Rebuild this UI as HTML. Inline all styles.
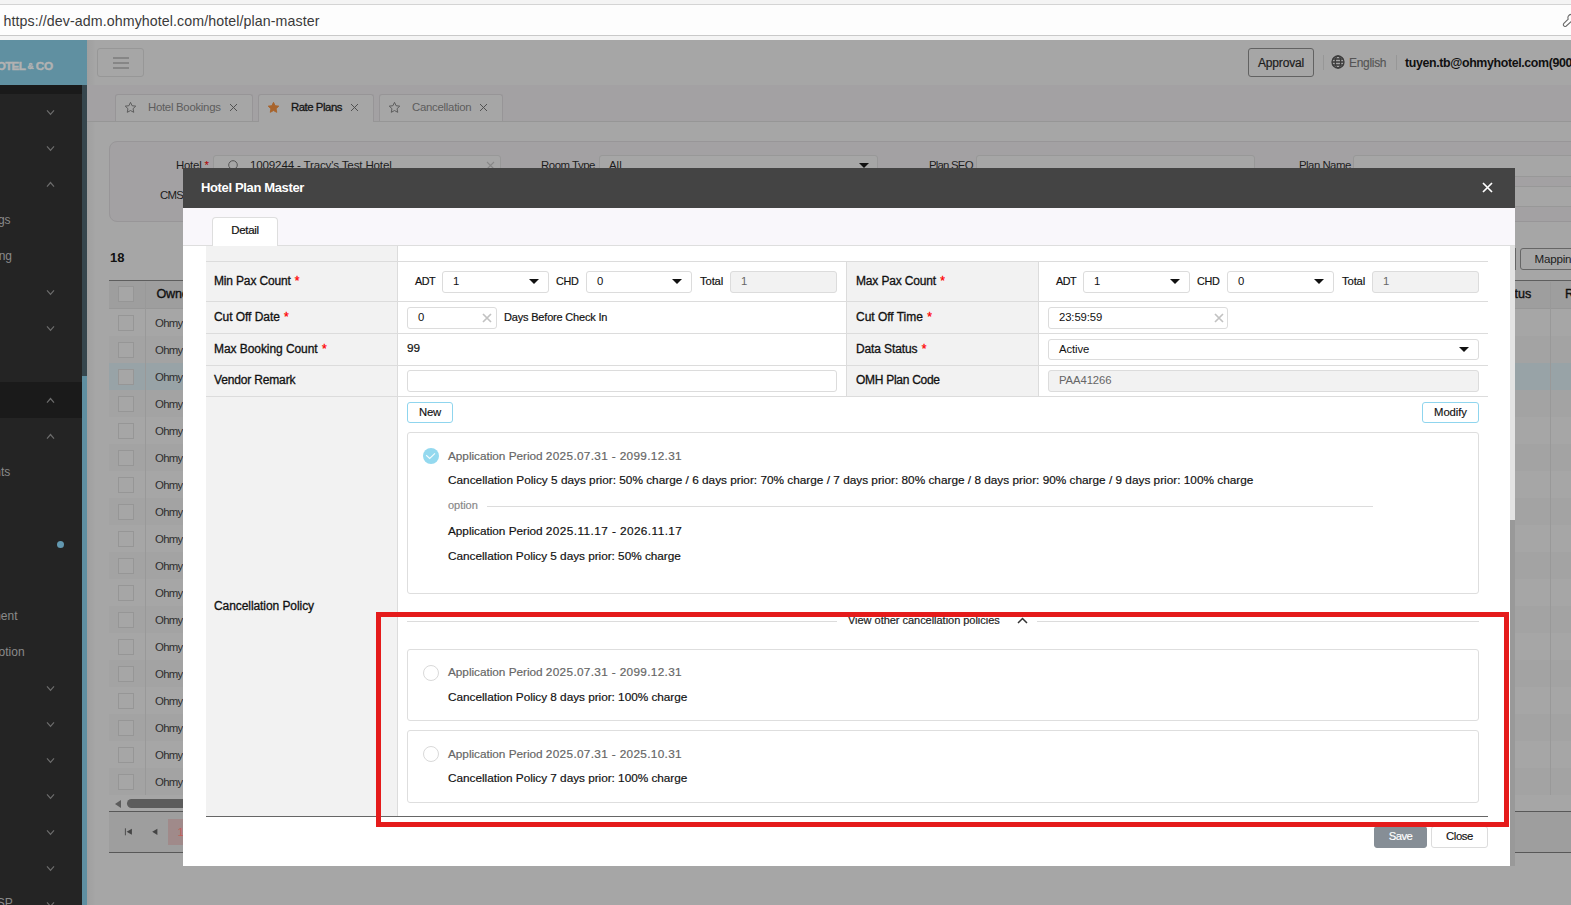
<!DOCTYPE html>
<html lang="en">
<head>
<meta charset="utf-8">
<title>Hotel Plan Master</title>
<style>
*{box-sizing:border-box;margin:0;padding:0}
html,body{width:1571px;height:905px;overflow:hidden}
body{position:relative;background:#a6a6a6;font-family:"Liberation Sans",sans-serif;font-size:12px;color:#111}
.abs,.t{position:absolute}
.t{white-space:nowrap;line-height:16px}
/* browser chrome */
#chrome{position:absolute;left:0;top:0;width:1571px;height:40px;background:#f4f4f4}
#urlbar{position:absolute;left:0;top:4px;width:1571px;height:32px;background:#fdfdfd;border-top:1px solid #d4d4d4;border-bottom:1px solid #c9c9c9}
#url{position:absolute;left:3.5px;top:11.5px;font-size:14.2px;letter-spacing:0.096px;color:#3a3a3a;line-height:18px;white-space:nowrap}
/* sidebar */
#logo{position:absolute;left:0;top:40px;width:87px;height:45px;background:#6090a1}
#side{position:absolute;left:0;top:85px;width:82px;height:820px;background:#242424}
#sidetop{position:absolute;left:0;top:85px;width:82px;height:9px;background:#1a1a1a}
#sideact{position:absolute;left:0;top:382px;width:82px;height:36px;background:#1a1a1a}
#sbar{position:absolute;left:82px;top:85px;width:5px;height:820px;background:#5f8fa1}
#sthumb{position:absolute;left:82px;top:85px;width:5px;height:291px;background:#36464d}
.chv{position:absolute;left:46px}
.lg{font-size:11.8px;font-weight:bold;letter-spacing:-0.35px;color:#b2b2b2;-webkit-text-stroke:0.45px #b2b2b2;line-height:14px}
.sm{position:absolute;color:#8a8a8a;font-size:12px;line-height:16px;white-space:nowrap}
/* top bar */
#hb{position:absolute;left:97px;top:48px;width:47px;height:29px;border:1px solid #979797;border-radius:3px}
#hb i{position:absolute;left:15px;width:16px;height:2px;background:#868686}
#tabstrip{position:absolute;left:87px;top:85px;width:1484px;height:37px;background:#a3a1a3;border-bottom:1px solid #969696}
.tab{position:absolute;top:94px;height:27px;border:1px solid #979597;border-bottom:none;border-radius:3px 3px 0 0;background:#a6a6a6}
.tab.on{background:#a6a6a6;height:28px}
.tab span{position:absolute;top:3.5px;font-size:12px;line-height:16px;white-space:nowrap;color:#5d5d5d}
.tab.on span{color:#151515}
.tab svg{position:absolute}
#sp{position:absolute;left:109px;top:141px;width:1500px;height:81px;background:#a3a1a3;border:1px solid #989698;border-radius:8px}
.inp{position:absolute;border:1px solid #989898;border-radius:3px;background:#a6a6a6}
/* grid */
#ghead{position:absolute;left:109px;top:280px;width:1462px;height:29px;background:#9e9e9e;border-top:1px solid #5e5e5e;border-bottom:1px solid #979797}
.gr{position:absolute;left:109px;width:1462px;height:27px}
.gr span{position:absolute;left:46px;top:5.5px;font-size:11.4px;letter-spacing:-0.72px;line-height:16px;color:#2e2e2e}
.cb{position:absolute;left:9px;top:6px;width:16px;height:16px;border:1px solid #969696;background:#a6a6a6;display:block}
.vl{position:absolute;width:1px;background:#999}
/* dialog */
#dlg{position:absolute;left:183px;top:168px;width:1332px;height:698px;background:#fff}
#dh{position:absolute;left:0;top:0;width:1332px;height:40px;background:#444}
#dh b{position:absolute;left:18px;top:11px;font-size:13px;letter-spacing:-0.358px;line-height:18px;color:#fff;white-space:nowrap}
#dtabs{position:absolute;left:0;top:40px;width:1332px;height:38px;background:#f9f7fb;border-bottom:1px solid #dedede}
#dtab{position:absolute;left:29px;top:9px;width:66px;height:29px;background:#fff;border:1px solid #dedede;border-bottom:none;border-radius:4px 4px 0 0;text-align:center;font-size:11.5px;letter-spacing:-0.3px;line-height:24px;-webkit-text-stroke:0.2px #111}
#strack{position:absolute;left:1327px;top:78px;width:5px;height:274px;background:#e3e3e3}
#sth{position:absolute;left:1327px;top:352px;width:5px;height:346px;background:#999}
.lab{position:absolute;background:#f2f2f2;border-bottom:1px solid #dcdcdc;border-right:1px solid #dcdcdc}
.lab b{position:absolute;left:8px;font-size:12px;font-weight:normal;-webkit-text-stroke:0.3px #111;line-height:16px;white-space:nowrap;color:#111}
.lab b em{color:#f00;font-style:normal;-webkit-text-stroke:0.3px #f00;letter-spacing:0;margin-left:1px}
.hl{position:absolute;height:1px;background:#dcdcdc}
.fi{position:absolute;height:22px;border:1px solid #dcdcdc;border-radius:3px;background:#fff;font-size:11.3px;letter-spacing:-0.1px;line-height:19px;padding-left:10px;color:#111;white-space:nowrap}
.fi.dis{background:#f2f2f2;color:#666}
.fi u{position:absolute;right:9px;top:7px;width:0;height:0;border-left:5px solid transparent;border-right:5px solid transparent;border-top:5px solid #111}
.fi svg{position:absolute;right:4px;top:5px}
.ft{position:absolute;font-size:11.8px;letter-spacing:-0.03px;-webkit-text-stroke:0.18px currentColor;line-height:16px;white-space:nowrap;color:#111}
.btn{position:absolute;height:21px;border:1px solid #dcdcdc;border-radius:3px;background:#fff;font-size:11.3px;-webkit-text-stroke:0.15px currentColor;line-height:19px;text-align:center;color:#111}
.btn.bl{border-color:#8fd5ee}
.card{position:absolute;left:224px;width:1072px;border:1px solid #dedede;border-radius:3px;background:#fff}
.card .ft{left:40px}
.g{color:#666}
#red{position:absolute;left:376px;top:612px;width:1133px;height:215px;border:5px solid #e51b1b}
</style>
</head>
<body>
<div id="chrome"><div id="urlbar"></div><div id="url">https://dev-adm.ohmyhotel.com/hotel/plan-master</div>
<svg class="abs" style="left:1551px;top:8px" width="20" height="24" viewBox="1551 8 20 24"><path d="M1571.5 14.4C1568.6 14.3 1567.3 17 1568.2 19.2L1563.9 23.4C1562.6 24.9 1564 27.2 1566 26.2L1571.5 21.3" fill="none" stroke="#6a6a6a" stroke-width="1.1"/></svg>
</div>

<!-- sidebar -->
<div id="logo"><span class="t lg" style="left:-3.2px;top:18.6px;letter-spacing:-0.8px">OTEL</span><span class="t lg" style="left:27.6px;top:19.3px;font-size:8.5px">&amp;</span><span class="t lg" style="left:35.8px;top:18.6px">CO</span></div>
<div id="side"></div><div id="sidetop"></div><div id="sideact"></div>
<div id="sbar"></div><div id="sthumb"></div>
<svg class="chv" style="top:109px" width="9" height="7" viewBox="0 0 9 7"><path d="M1 1.3 L4.5 5.4 L8 1.3" fill="none" stroke="#6c6c6c" stroke-width="1.2"/></svg>
<svg class="chv" style="top:145px" width="9" height="7" viewBox="0 0 9 7"><path d="M1 1.3 L4.5 5.4 L8 1.3" fill="none" stroke="#6c6c6c" stroke-width="1.2"/></svg>
<svg class="chv" style="top:289px" width="9" height="7" viewBox="0 0 9 7"><path d="M1 1.3 L4.5 5.4 L8 1.3" fill="none" stroke="#6c6c6c" stroke-width="1.2"/></svg>
<svg class="chv" style="top:325px" width="9" height="7" viewBox="0 0 9 7"><path d="M1 1.3 L4.5 5.4 L8 1.3" fill="none" stroke="#6c6c6c" stroke-width="1.2"/></svg>
<svg class="chv" style="top:685px" width="9" height="7" viewBox="0 0 9 7"><path d="M1 1.3 L4.5 5.4 L8 1.3" fill="none" stroke="#6c6c6c" stroke-width="1.2"/></svg>
<svg class="chv" style="top:721px" width="9" height="7" viewBox="0 0 9 7"><path d="M1 1.3 L4.5 5.4 L8 1.3" fill="none" stroke="#6c6c6c" stroke-width="1.2"/></svg>
<svg class="chv" style="top:757px" width="9" height="7" viewBox="0 0 9 7"><path d="M1 1.3 L4.5 5.4 L8 1.3" fill="none" stroke="#6c6c6c" stroke-width="1.2"/></svg>
<svg class="chv" style="top:793px" width="9" height="7" viewBox="0 0 9 7"><path d="M1 1.3 L4.5 5.4 L8 1.3" fill="none" stroke="#6c6c6c" stroke-width="1.2"/></svg>
<svg class="chv" style="top:829px" width="9" height="7" viewBox="0 0 9 7"><path d="M1 1.3 L4.5 5.4 L8 1.3" fill="none" stroke="#6c6c6c" stroke-width="1.2"/></svg>
<svg class="chv" style="top:865px" width="9" height="7" viewBox="0 0 9 7"><path d="M1 1.3 L4.5 5.4 L8 1.3" fill="none" stroke="#6c6c6c" stroke-width="1.2"/></svg>
<svg class="chv" style="top:900.5px" width="9" height="7" viewBox="0 0 9 7"><path d="M1 1.3 L4.5 5.4 L8 1.3" fill="none" stroke="#6c6c6c" stroke-width="1.2"/></svg>
<svg class="chv" style="top:181px" width="9" height="7" viewBox="0 0 9 7"><path d="M1 5.6 L4.5 1.5 L8 5.6" fill="none" stroke="#6c6c6c" stroke-width="1.2"/></svg>
<svg class="chv" style="top:397px" width="9" height="7" viewBox="0 0 9 7"><path d="M1 5.6 L4.5 1.5 L8 5.6" fill="none" stroke="#6c6c6c" stroke-width="1.2"/></svg>
<svg class="chv" style="top:433px" width="9" height="7" viewBox="0 0 9 7"><path d="M1 5.6 L4.5 1.5 L8 5.6" fill="none" stroke="#6c6c6c" stroke-width="1.2"/></svg>
<span class="sm" style="top:212px;right:1560.4px">gs</span>
<span class="sm" style="top:248px;right:1559px">ng</span>
<span class="sm" style="top:464px;right:1560.7px">nts</span>
<span class="sm" style="top:608px;right:1553.5px">nent</span>
<span class="sm" style="top:644px;right:1546.4px">otion</span>
<span class="sm" style="top:895px;right:1558.2px">SP</span>
<div class="abs" style="left:57px;top:541px;width:7px;height:7px;border-radius:50%;background:#6298b0"></div>

<div class="abs" style="left:87px;top:40px;width:9px;height:865px;background:linear-gradient(to right,rgba(0,0,0,0.045),rgba(0,0,0,0))"></div>
<!-- top bar -->
<div id="hb"><i style="top:7.5px"></i><i style="top:12.5px"></i><i style="top:17.5px"></i></div>
<div class="abs" style="left:1248px;top:48px;width:66px;height:29px;border:1px solid #626262;border-radius:3px;text-align:center;-webkit-text-stroke:0.2px #1c1c1c;font-size:12px;letter-spacing:-0.158px;line-height:28px;color:#1c1c1c">Approval</div>
<div class="vl" style="left:1323px;top:55px;height:15px;background:#979797"></div>
<svg class="abs" style="left:1331.3px;top:55.4px" width="14" height="14" viewBox="0 0 14 14"><g fill="none" stroke="#3c3c3c" stroke-width="1.3"><circle cx="7" cy="7" r="6"/><ellipse cx="7" cy="7" rx="2.7" ry="6"/><path d="M1 7H13M1.8 4H12.2M1.8 10H12.2"/></g></svg>
<span class="t" style="left:1349px;top:54.5px;-webkit-text-stroke:0.15px #555;font-size:12px;letter-spacing:-0.308px;color:#555">English</span>
<div class="vl" style="left:1396px;top:55px;height:15px;background:#979797"></div>
<span class="t" style="left:1405px;top:54.5px;font-size:12.4px;letter-spacing:-0.37px;font-weight:bold;color:#111">tuyen.tb@ohmyhotel.com(900</span>

<!-- tab strip -->
<div id="tabstrip"></div>
<div class="tab" style="left:115px;width:138px"><svg style="left:8px;top:5.5px" width="13" height="13" viewBox="0 0 24 24"><path d="M12 2.5l2.9 6.2 6.8.8-5 4.7 1.3 6.7-6-3.3-6 3.3 1.3-6.7-5-4.7 6.8-.8z" fill="none" stroke="#5a5a5a" stroke-width="1.8" stroke-linejoin="round"/></svg><span style="left:32px;font-size:11.4px;letter-spacing:-0.287px">Hotel Bookings</span><svg style="left:113px;top:8px" width="9" height="9" viewBox="0 0 9 9"><path d="M1 1L8 8M8 1L1 8" stroke="#4c4c4c" stroke-width="0.95"/></svg></div>
<div class="tab on" style="left:258px;width:116px"><svg style="left:7.5px;top:5.5px" width="13" height="13" viewBox="0 0 24 24"><path d="M12 2.5l2.9 6.2 6.8.8-5 4.7 1.3 6.7-6-3.3-6 3.3 1.3-6.7-5-4.7 6.8-.8z" fill="#a8642c" stroke="#a8642c" stroke-width="1.8" stroke-linejoin="round"/></svg><span style="left:32px;font-size:11.4px;letter-spacing:-0.472px;-webkit-text-stroke:0.3px #151515">Rate Plans</span><svg style="left:91px;top:8px" width="9" height="9" viewBox="0 0 9 9"><path d="M1 1L8 8M8 1L1 8" stroke="#4c4c4c" stroke-width="0.95"/></svg></div>
<div class="tab" style="left:379px;width:124px"><svg style="left:8px;top:5.5px" width="13" height="13" viewBox="0 0 24 24"><path d="M12 2.5l2.9 6.2 6.8.8-5 4.7 1.3 6.7-6-3.3-6 3.3 1.3-6.7-5-4.7 6.8-.8z" fill="none" stroke="#5a5a5a" stroke-width="1.8" stroke-linejoin="round"/></svg><span style="left:32px;font-size:11.4px;letter-spacing:-0.274px">Cancellation</span><svg style="left:99px;top:8px" width="9" height="9" viewBox="0 0 9 9"><path d="M1 1L8 8M8 1L1 8" stroke="#4c4c4c" stroke-width="0.95"/></svg></div>

<!-- search panel -->
<div id="sp"></div>
<span class="t" style="left:176px;top:157.3px;font-size:11.4px;letter-spacing:-0.218px;color:#1c1c1c">Hotel <span style="color:#b00000">*</span></span>
<div class="inp" style="left:213px;top:155px;width:288px;height:22px"></div>
<svg class="abs" style="left:227px;top:159px" width="12" height="12" viewBox="0 0 12 12"><circle cx="6" cy="6" r="4.3" fill="none" stroke="#555" stroke-width="1"/></svg>
<span class="t" style="left:250px;top:157.3px;font-size:11.6px;letter-spacing:-0.17px;color:#1c1c1c">1009244 - Tracy's Test Hotel</span>
<svg class="abs" style="left:486px;top:161px" width="9" height="9" viewBox="0 0 9 9"><path d="M1 1L8 8M8 1L1 8" stroke="#888" stroke-width="1.1"/></svg>
<span class="t" style="left:160px;top:187.3px;font-size:11.4px;letter-spacing:-0.671px;color:#1c1c1c">CMS</span>
<span class="t" style="left:541px;top:157.3px;font-size:11.4px;letter-spacing:-0.46px;color:#1c1c1c">Room Type</span>
<div class="inp" style="left:599px;top:155px;width:279px;height:22px"></div>
<span class="t" style="left:609px;top:157.3px;font-size:11.4px;color:#1c1c1c">All</span>
<div class="abs" style="left:859px;top:163px;width:0;height:0;border-left:5px solid transparent;border-right:5px solid transparent;border-top:5px solid #111"></div>
<span class="t" style="left:929px;top:157.3px;font-size:11.4px;letter-spacing:-0.79px;color:#1c1c1c">Plan SEQ</span>
<div class="inp" style="left:976px;top:155px;width:279px;height:22px"></div>
<span class="t" style="left:1299px;top:157.3px;font-size:11.4px;letter-spacing:-0.516px;color:#1c1c1c">Plan Name</span>
<div class="inp" style="left:1353px;top:155px;width:260px;height:22px"></div>
<div class="inp" style="left:1353px;top:186px;width:260px;height:21px"></div>

<span class="t" style="left:110px;top:250px;font-size:13px;font-weight:bold;color:#111">18</span>
<div class="abs" style="left:1520px;top:248px;width:70px;height:22px;border:1px solid #666;border-radius:3px"></div>
<span class="t" style="left:1534.5px;top:251px;font-size:11.6px;letter-spacing:-0.2px;color:#1c1c1c">Mapping</span>
<div class="vl" style="left:1515px;top:248px;height:22px;background:#666"></div>

<!-- grid -->
<div id="ghead"><i class="cb" style="top:5px"></i><span class="t" style="left:47.5px;top:5px;font-size:12.6px;letter-spacing:-0.25px;-webkit-text-stroke:0.35px #111;color:#111">Owner</span><span class="t" style="left:1405.5px;top:5px;font-size:12.6px;-webkit-text-stroke:0.35px #111;color:#111">tus</span><span class="t" style="left:1456px;top:5px;font-size:12.6px;-webkit-text-stroke:0.35px #111;color:#111">R</span></div>
<div class="gr" style="top:309px;background:#a6a6a6"><i class="cb"></i><span>Ohmy</span></div>
<div class="gr" style="top:336px;background:#a3a3a3"><i class="cb"></i><span>Ohmy</span></div>
<div class="gr" style="top:363px;background:#98a3a7"><i class="cb"></i><span>Ohmy</span></div>
<div class="gr" style="top:390px;background:#a3a3a3"><i class="cb"></i><span>Ohmy</span></div>
<div class="gr" style="top:417px;background:#a6a6a6"><i class="cb"></i><span>Ohmy</span></div>
<div class="gr" style="top:444px;background:#a3a3a3"><i class="cb"></i><span>Ohmy</span></div>
<div class="gr" style="top:471px;background:#a6a6a6"><i class="cb"></i><span>Ohmy</span></div>
<div class="gr" style="top:498px;background:#a3a3a3"><i class="cb"></i><span>Ohmy</span></div>
<div class="gr" style="top:525px;background:#a6a6a6"><i class="cb"></i><span>Ohmy</span></div>
<div class="gr" style="top:552px;background:#a3a3a3"><i class="cb"></i><span>Ohmy</span></div>
<div class="gr" style="top:579px;background:#a6a6a6"><i class="cb"></i><span>Ohmy</span></div>
<div class="gr" style="top:606px;background:#a3a3a3"><i class="cb"></i><span>Ohmy</span></div>
<div class="gr" style="top:633px;background:#a6a6a6"><i class="cb"></i><span>Ohmy</span></div>
<div class="gr" style="top:660px;background:#a3a3a3"><i class="cb"></i><span>Ohmy</span></div>
<div class="gr" style="top:687px;background:#a6a6a6"><i class="cb"></i><span>Ohmy</span></div>
<div class="gr" style="top:714px;background:#a3a3a3"><i class="cb"></i><span>Ohmy</span></div>
<div class="gr" style="top:741px;background:#a6a6a6"><i class="cb"></i><span>Ohmy</span></div>
<div class="gr" style="top:768px;background:#a3a3a3"><i class="cb"></i><span>Ohmy</span></div>
<div class="vl" style="left:145px;top:282px;height:513px"></div>
<div class="vl" style="left:1550px;top:282px;height:513px"></div>
<!-- h scrollbar + pager -->
<div class="abs" style="left:115px;top:800px;width:0;height:0;border-top:4px solid transparent;border-bottom:4px solid transparent;border-right:6px solid #5c5c5c"></div>
<div class="abs" style="left:127px;top:799px;width:600px;height:9px;border-radius:5px;background:#5c5c5c"></div>
<div class="abs" style="left:109px;top:811px;width:1462px;height:42px;background:#9e9e9e;border-top:1px solid #585858;border-bottom:1px solid #585858"></div>
<svg class="abs" style="left:124px;top:828px" width="9" height="8" viewBox="0 0 9 8"><path d="M1.4 0.3V7.3" stroke="#444" stroke-width="0.9"/><path d="M7.9 0.8V6.8L2.6 3.8z" fill="#444"/></svg>
<svg class="abs" style="left:152px;top:828px" width="6" height="8" viewBox="0 0 6 8"><path d="M5.4 0.7V6.9L0.2 3.8z" fill="#444"/></svg>
<div class="abs" style="left:168px;top:819px;width:26px;height:26px;background:#a08a8a"></div>
<span class="t" style="left:177.5px;top:822.5px;font-size:11.5px;color:#c45e5a;line-height:18px">1</span>

<!-- dialog -->
<div id="dlg">
<div id="dh"><b>Hotel Plan Master</b><svg class="abs" style="left:1299px;top:14px" width="11" height="11" viewBox="0 0 11 11"><path d="M1 1L10 10M10 1L1 10" stroke="#fff" stroke-width="1.7"/></svg></div>
<div id="dtabs"><div id="dtab">Detail</div></div>
<div id="strack"></div><div id="sth"></div>

<!-- label cells (coords relative to dialog: x-183, y-168) -->
<div class="lab" style="left:23px;top:78px;width:192px;height:16px"></div>
<div class="lab" style="left:23px;top:94px;width:192px;height:40px"><b style="top:11px;font-size:12px;letter-spacing:-0.162px">Min Pax Count <em>*</em></b></div>
<div class="lab" style="left:23px;top:134px;width:192px;height:32px"><b style="top:7px;font-size:12px;letter-spacing:-0.056px">Cut Off Date <em>*</em></b></div>
<div class="lab" style="left:23px;top:166px;width:192px;height:32px"><b style="top:7px;font-size:12px;letter-spacing:-0.066px">Max Booking Count <em>*</em></b></div>
<div class="lab" style="left:23px;top:198px;width:192px;height:31px"><b style="top:6px;font-size:12px;letter-spacing:-0.159px">Vendor Remark</b></div>
<div class="lab" style="left:23px;top:229px;width:192px;height:419px;border-bottom:none"><b style="top:201px;font-size:12px;letter-spacing:-0.073px">Cancellation Policy</b></div>
<div class="lab" style="left:663px;top:94px;width:193px;height:40px;border-left:1px solid #dcdcdc"><b style="left:9px;top:11px;font-size:12px;letter-spacing:-0.157px">Max Pax Count <em>*</em></b></div>
<div class="lab" style="left:663px;top:134px;width:193px;height:32px;border-left:1px solid #dcdcdc"><b style="left:9px;top:7px;font-size:12px;letter-spacing:-0.021px">Cut Off Time <em>*</em></b></div>
<div class="lab" style="left:663px;top:166px;width:193px;height:32px;border-left:1px solid #dcdcdc"><b style="left:9px;top:7px;font-size:12px;letter-spacing:-0.118px">Data Status <em>*</em></b></div>
<div class="lab" style="left:663px;top:198px;width:193px;height:31px;border-left:1px solid #dcdcdc"><b style="left:9px;top:6px;font-size:12px;letter-spacing:-0.282px">OMH Plan Code</b></div>
<div class="hl" style="left:215px;top:93px;width:1090px"></div>
<div class="hl" style="left:215px;top:133px;width:1090px"></div>
<div class="hl" style="left:215px;top:165px;width:1090px"></div>
<div class="hl" style="left:215px;top:197px;width:1090px"></div>
<div class="hl" style="left:215px;top:228px;width:1090px"></div>
<div class="hl" style="left:23px;top:648px;width:1282px;background:#666"></div>

<!-- row: pax -->
<span class="ft" style="left:232px;top:105px;font-size:10.8px;letter-spacing:-0.55px">ADT</span>
<div class="fi" style="left:259px;top:103px;width:107px">1<u></u></div>
<span class="ft" style="left:373px;top:105px;font-size:10.8px;letter-spacing:-0.35px">CHD</span>
<div class="fi" style="left:403px;top:103px;width:106px">0<u></u></div>
<span class="ft" style="left:517px;top:105px;font-size:11.3px;letter-spacing:-0.15px">Total</span>
<div class="fi dis" style="left:547px;top:103px;width:107px">1</div>
<span class="ft" style="left:873px;top:105px;font-size:10.8px;letter-spacing:-0.55px">ADT</span>
<div class="fi" style="left:900px;top:103px;width:107px">1<u></u></div>
<span class="ft" style="left:1014px;top:105px;font-size:10.8px;letter-spacing:-0.35px">CHD</span>
<div class="fi" style="left:1044px;top:103px;width:107px">0<u></u></div>
<span class="ft" style="left:1159px;top:105px;font-size:11.3px;letter-spacing:-0.15px">Total</span>
<div class="fi dis" style="left:1189px;top:103px;width:107px">1</div>
<!-- row: cutoff -->
<div class="fi" style="left:224px;top:139px;width:90px">0<svg width="10" height="10" viewBox="0 0 10 10"><path d="M1 1L9 9M9 1L1 9" stroke="#c2c2c2" stroke-width="1.7"/></svg></div>
<span class="ft" style="left:321px;top:141px;font-size:11px;letter-spacing:-0.185px">Days Before Check In</span>
<div class="fi" style="left:865px;top:139px;width:180px">23:59:59<svg style="right:3.5px" width="10" height="10" viewBox="0 0 10 10"><path d="M1 1L9 9M9 1L1 9" stroke="#c2c2c2" stroke-width="1.7"/></svg></div>
<!-- row: max booking -->
<span class="ft" style="left:224px;top:172px">99</span>
<div class="fi" style="left:865px;top:171px;width:431px;height:21px;line-height:18px">Active<u style="top:6.5px"></u></div>
<!-- row: vendor -->
<div class="fi" style="left:224px;top:202px;width:430px"></div>
<div class="fi dis" style="left:865px;top:202px;width:431px">PAA41266</div>
<!-- buttons -->
<div class="btn bl" style="left:224px;top:234px;width:46px;font-size:11.3px;letter-spacing:-0.233px">New</div>
<div class="btn bl" style="left:1239px;top:234px;width:57px;font-size:11.3px;letter-spacing:-0.062px">Modify</div>
<!-- card 1 -->
<div class="card" style="top:264px;height:162px">
<svg class="abs" style="left:15px;top:15px" width="16" height="16" viewBox="0 0 16 16"><circle cx="8" cy="8" r="8" fill="#94d9ef"/><path d="M3.2 7.3L6.7 10.4L12 5.4" fill="none" stroke="#fff" stroke-opacity="0.9" stroke-width="1.15"/></svg>
<span class="ft g" style="top:15px">Application Period <span style="letter-spacing:0.33px">2025.07.31 - 2099.12.31</span></span>
<span class="ft" style="top:39px;font-size:11.8px;letter-spacing:0.005px">Cancellation Policy 5 days prior: 50% charge / 6 days prior: 70% charge / 7 days prior: 80% charge / 8 days prior: 90% charge / 9 days prior: 100% charge</span>
<span class="ft" style="top:64px;font-size:11px;color:#888">option</span>
<div class="hl" style="left:79px;top:73px;width:886px"></div>
<span class="ft" style="top:90px">Application Period <span style="letter-spacing:0.42px">2025.11.17 - 2026.11.17</span></span>
<span class="ft" style="top:115px">Cancellation Policy 5 days prior: 50% charge</span>
</div>
<!-- divider -->
<div class="hl" style="left:224px;top:453px;width:430px"></div>
<div class="hl" style="left:854px;top:453px;width:442px"></div>
<span class="ft" style="left:665px;top:444px;font-size:11px;color:#222">View other cancellation policies</span>
<svg class="abs" style="left:834px;top:449px" width="11" height="7" viewBox="0 0 11 7"><path d="M1 6L5.5 1.5L10 6" fill="none" stroke="#333" stroke-width="1.5"/></svg>
<!-- card 2 -->
<div class="card" style="top:481px;height:72px">
<div class="abs" style="left:15px;top:15px;width:16px;height:16px;border:1px solid #d9d9d9;border-radius:50%"></div>
<span class="ft g" style="top:14px">Application Period <span style="letter-spacing:0.33px">2025.07.31 - 2099.12.31</span></span>
<span class="ft" style="top:39px">Cancellation Policy 8 days prior: 100% charge</span>
</div>
<!-- card 3 -->
<div class="card" style="top:562px;height:73px">
<div class="abs" style="left:15px;top:15px;width:16px;height:16px;border:1px solid #d9d9d9;border-radius:50%"></div>
<span class="ft g" style="top:15px">Application Period <span style="letter-spacing:0.33px">2025.07.31 - 2025.10.31</span></span>
<span class="ft" style="top:39px">Cancellation Policy 7 days prior: 100% charge</span>
</div>
<!-- footer buttons -->
<div class="btn" style="left:1191px;top:658px;height:22px;width:53px;background:#868e96;border-color:#868e96;color:#fff;font-size:11.3px;letter-spacing:-0.537px">Save</div>
<div class="btn" style="left:1248px;top:658px;height:22px;width:57px;font-size:11.3px;letter-spacing:-0.376px">Close</div>
</div>
<div id="red"></div>
</body>
</html>
